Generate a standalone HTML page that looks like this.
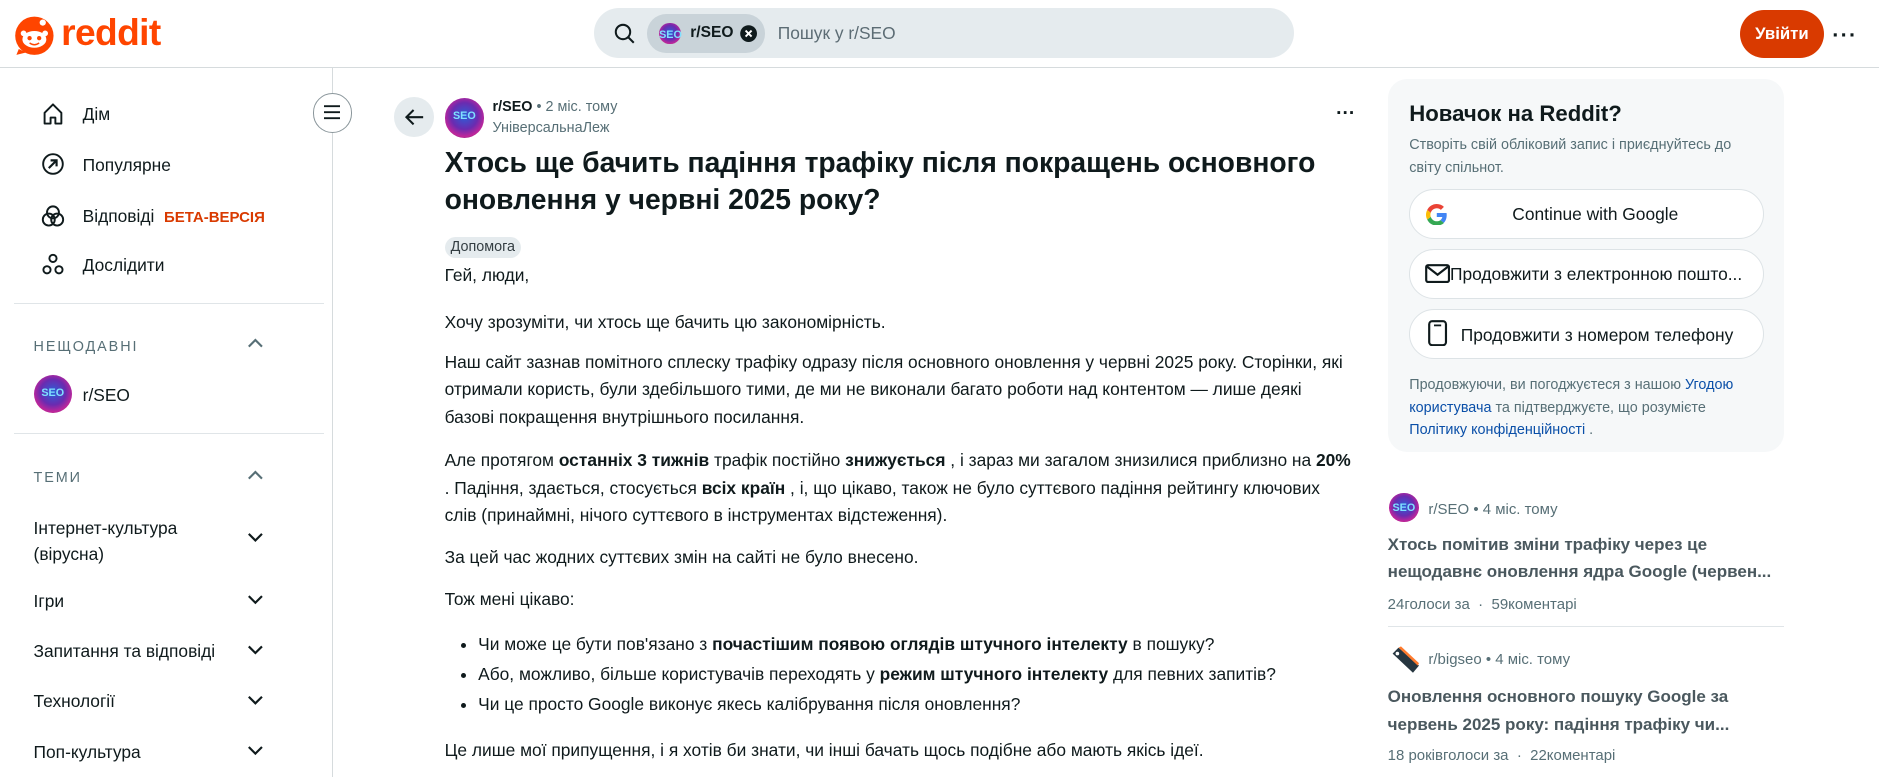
<!DOCTYPE html>
<html><head><meta charset="utf-8">
<style>
html,body{margin:0;padding:0;background:#fff;overflow:hidden}
body{width:1879px;height:777px}
#w{zoom:1.19834;width:1568px;height:648px;position:relative;font-family:"Liberation Sans","Noto Sans CJK SC",sans-serif;color:#0f1a1c}
.a{position:absolute;white-space:nowrap}
.hdr{position:absolute;left:0;top:0;width:1568px;height:56px;border-bottom:1px solid #d6dbdd}
.search{position:absolute;left:496px;top:7px;width:584px;height:41px;border-radius:21px;background:#e5ebee}
.chip{position:absolute;left:540px;top:12px;width:98px;height:32px;border-radius:16px;background:#c9d3d9}
.av{border-radius:50%;background:radial-gradient(circle at 50% 45%,#2b5fd8 0,#6a2bb0 45%,#c0269a 70%,#2b0f3a 100%);position:absolute}
.av::after{content:"SEO";position:absolute;left:0;right:0;top:30%;text-align:center;font-weight:bold;color:#7fe0ff;font-size:9px}
.nav{font-size:14.5px}
.sep{position:absolute;height:1px;background:#e0e5e8}
.sec{font-size:12px;letter-spacing:1.6px;color:#576f76}
.body p{margin:0}
.btn{position:absolute;left:1176px;width:294px;height:40px;border:1px solid #dde3e6;border-radius:21px;background:#fff;font-size:14.5px}
.small{font-size:12px;color:#576f76}
.blue{color:#0a4fa8}
.rt{font-size:14.5px;font-weight:bold;color:#4a585e;line-height:23px}
</style></head><body><div id="w">
<div class="hdr"></div>
<svg class="a" style="left:12px;top:11px" width="34" height="36" viewBox="0 0 34 36"><circle cx="17" cy="19" r="16" fill="#ff4500"/><path d="M4 30 L2 35 L10 33Z" fill="#ff4500"/><ellipse cx="17" cy="22" rx="10" ry="7" fill="#fff"/><circle cx="13" cy="21" r="1.8" fill="#ff4500"/><circle cx="21" cy="21" r="1.8" fill="#ff4500"/><circle cx="24" cy="8" r="2.6" fill="#fff"/><circle cx="8" cy="17" r="2.4" fill="#fff"/><circle cx="26" cy="17" r="2.4" fill="#fff"/><path d="M13 25 q4 3 8 0" stroke="#ff4500" stroke-width="1.2" fill="none"/></svg>
<div class="a" style="left:51px;top:9px;font-size:31px;font-weight:bold;color:#ff4500;letter-spacing:-0.5px">reddit</div>
<div class="search"></div>
<svg class="a" style="left:512px;top:19px" width="18" height="18" viewBox="0 0 18 18"><circle cx="7.5" cy="7.5" r="6" stroke="#0f1a1c" stroke-width="1.7" fill="none"/><path d="M12 12l4.5 4.5" stroke="#0f1a1c" stroke-width="1.7"/></svg>
<div class="chip"></div>
<div class="av" style="left:550px;top:19px;width:18px;height:18px"></div>
<div class="a" style="left:576px;top:20px;font-size:13px;font-weight:bold">r/SEO</div>
<svg class="a" style="left:617px;top:20px" width="16" height="16" viewBox="0 0 16 16"><circle cx="8" cy="8" r="7" fill="#0f1a1c"/><path d="M5.5 5.5l5 5M10.5 5.5l-5 5" stroke="#fff" stroke-width="1.6"/></svg>
<div class="a" style="left:649px;top:19px;font-size:14.5px;color:#5c6c74">Пошук у r/SEO</div>
<div class="a" style="left:1452px;top:8px;width:70px;height:40px;border-radius:20px;background:#d93a00;color:#fff;font-weight:bold;font-size:14px;text-align:center;line-height:40px">Увійти</div>
<div class="a" style="left:1529px;top:18px;font-size:18px;font-weight:bold;letter-spacing:1px">···</div>

<div class="a" style="left:277px;top:57px;width:1px;height:600px;background:#d6dbdd"></div>
<svg class="a" style="left:34px;top:85px" width="20" height="20" viewBox="0 0 20 20"><path d="M3 9L10 2l7 7v9h-5v-5h-4v5H3z" fill="none" stroke="#0f1a1c" stroke-width="1.6" stroke-linejoin="round"/></svg>
<div class="a nav" style="left:69px;top:87px">Дім</div>
<svg class="a" style="left:34px;top:127px" width="20" height="20" viewBox="0 0 20 20"><circle cx="10" cy="10" r="8.2" fill="none" stroke="#0f1a1c" stroke-width="1.6"/><path d="M6.5 13.5l6.5-6.5M8 7h5v5" fill="none" stroke="#0f1a1c" stroke-width="1.8"/></svg>
<div class="a nav" style="left:69px;top:129px">Популярне</div>
<svg class="a" style="left:34px;top:170px" width="20" height="20" viewBox="0 0 20 20"><circle cx="10" cy="7" r="5" fill="none" stroke="#0f1a1c" stroke-width="1.6"/><circle cx="6.5" cy="13" r="5" fill="none" stroke="#0f1a1c" stroke-width="1.6"/><circle cx="13.5" cy="13" r="5" fill="none" stroke="#0f1a1c" stroke-width="1.6"/></svg>
<div class="a nav" style="left:69px;top:172px">Відповіді <span style="color:#d93a00;font-size:12.5px;font-weight:bold;margin-left:4px">БЕТА-ВЕРСІЯ</span></div>
<svg class="a" style="left:34px;top:211px" width="20" height="20" viewBox="0 0 20 20"><circle cx="10" cy="4.5" r="3" fill="none" stroke="#0f1a1c" stroke-width="1.6"/><circle cx="5" cy="14" r="3" fill="none" stroke="#0f1a1c" stroke-width="1.6"/><circle cx="15" cy="14" r="3" fill="none" stroke="#0f1a1c" stroke-width="1.6"/></svg>
<div class="a nav" style="left:69px;top:213px">Дослідити</div>
<div class="sep" style="left:12px;top:253px;width:258px"></div>
<div class="a sec" style="left:28px;top:283px">НЕЩОДАВНІ</div>
<svg class="a" style="left:206px;top:281px" width="14" height="10" viewBox="0 0 14 10"><path d="M1.5 8L7 2.5 12.5 8" fill="none" stroke="#576f76" stroke-width="1.8"/></svg>
<div class="av" style="left:28px;top:313px;width:32px;height:32px"></div>
<div class="a nav" style="left:69px;top:321px">r/SEO</div>
<div class="sep" style="left:12px;top:361px;width:258px"></div>
<div class="a sec" style="left:28px;top:392px">ТЕМИ</div>
<svg class="a" style="left:206px;top:391px" width="14" height="10" viewBox="0 0 14 10"><path d="M1.5 8L7 2.5 12.5 8" fill="none" stroke="#576f76" stroke-width="1.8"/></svg>
<div class="a nav" style="left:28px;top:431px;line-height:21px">Інтернет-культура<br>(вірусна)</div>
<div class="a nav" style="left:28px;top:493px">Ігри</div>
<div class="a nav" style="left:28px;top:535px">Запитання та відповіді</div>
<div class="a nav" style="left:28px;top:577px">Технології</div>
<div class="a nav" style="left:28px;top:619px">Поп-культура</div>
<svg class="a" style="left:206px;top:444px" width="14" height="190" viewBox="0 0 14 190"><g fill="none" stroke="#0f1a1c" stroke-width="1.8"><path d="M1.5 1.5L7 7 12.5 1.5"/><path d="M1.5 53.5L7 59 12.5 53.5"/><path d="M1.5 95.5L7 101 12.5 95.5"/><path d="M1.5 137.5L7 143 12.5 137.5"/><path d="M1.5 179.5L7 185 12.5 179.5"/></g></svg>
<div class="a" style="left:261px;top:78px;width:31px;height:31px;border-radius:50%;border:1px solid #8a969b;background:#fff"></div>
<svg class="a" style="left:270px;top:88px" width="14" height="12" viewBox="0 0 14 12"><path d="M0 1h14M0 6h14M0 11h14" stroke="#0f1a1c" stroke-width="1.6"/></svg>

<div class="a" style="left:329px;top:81px;width:33px;height:33px;border-radius:50%;background:#e5ebee"></div>
<svg class="a" style="left:337px;top:89px" width="17" height="17" viewBox="0 0 17 17"><path d="M16 8.5H2M8 2.5l-6 6 6 6" fill="none" stroke="#0f1a1c" stroke-width="1.7"/></svg>
<div class="av" style="left:371px;top:82px;width:33px;height:33px"></div>
<div class="a" style="left:411px;top:83px;font-size:12px"><b>r/SEO</b> <span style="color:#576f76">• 2 міс. тому</span></div>
<div class="a" style="left:411px;top:100px;font-size:12px;color:#576f76">УніверсальнаЛеж</div>
<div class="a" style="left:1115px;top:86px;font-size:16px;font-weight:bold">···</div>
<div class="a" style="left:371px;top:120px;font-size:23.6px;font-weight:bold;line-height:31px;white-space:normal;width:760px">Хтось ще бачить падіння трафіку після покращень основного оновлення у червні 2025 року?</div>
<div class="a" style="left:371px;top:198px;height:17px;padding:0 5px;border-radius:9px;background:#e5ebee;font-size:12px;line-height:17px;color:#333d42">Допомога</div>
<div class="a body" style="left:371px;top:219px;width:757px;font-size:14.5px;line-height:23px;white-space:normal">
<p>Гей, люди,</p>
<p style="margin-top:16px">Хочу зрозуміти, чи хтось ще бачить цю закономірність.</p>
<p style="margin-top:10px">Наш сайт зазнав помітного сплеску трафіку одразу після основного оновлення у червні 2025 року. Сторінки, які отримали користь, були здебільшого тими, де ми не виконали багато роботи над контентом — лише деякі базові покращення внутрішнього посилання.</p>
<p style="margin-top:13px">Але протягом <b>останніх 3 тижнів</b> трафік постійно <b>знижується</b> , і зараз ми загалом знизилися приблизно на <b>20%</b> . Падіння, здається, стосується <b>всіх країн</b> , і, що цікаво, також не було суттєвого падіння рейтингу ключових слів (принаймні, нічого суттєвого в інструментах відстеження).</p>
<p style="margin-top:12px">За цей час жодних суттєвих змін на сайті не було внесено.</p>
<p style="margin-top:12px">Тож мені цікаво:</p>
<ul style="margin:14px 0 0 0;padding-left:28px;line-height:25px">
<li>Чи може це бути пов'язано з <b>почастішим появою оглядів штучного інтелекту</b> в пошуку?</li>
<li>Або, можливо, більше користувачів переходять у <b>режим штучного інтелекту</b> для певних запитів?</li>
<li>Чи це просто Google виконує якесь калібрування після оновлення?</li>
</ul>
<p style="margin-top:14px">Це лише мої припущення, і я хотів би знати, чи інші бачать щось подібне або мають якісь ідеї.</p>
</div>

<div class="a" style="left:1158px;top:66px;width:331px;height:311px;border-radius:16px;background:#f6f8f9"></div>
<div class="a" style="left:1176px;top:84px;font-size:18.5px;font-weight:bold">Новачок на Reddit?</div>
<div class="a small" style="left:1176px;top:112px;line-height:19px;white-space:normal;width:290px">Створіть свій обліковий запис і приєднуйтесь до світу спільнот.</div>
<div class="btn" style="top:158px"></div>
<svg class="a" style="left:1190px;top:170px" width="18" height="18" viewBox="0 0 48 48"><path fill="#EA4335" d="M24 9.5c3.5 0 6.6 1.2 9.1 3.6l6.8-6.8C35.8 2.4 30.3 0 24 0 14.6 0 6.6 5.4 2.7 13.3l7.9 6.1C12.5 13.6 17.8 9.5 24 9.5z"/><path fill="#4285F4" d="M46.1 24.5c0-1.6-.1-3.1-.4-4.5H24v9h12.4c-.5 2.9-2.2 5.3-4.6 6.9l7.7 6c4.5-4.2 6.6-10.3 6.6-17.4z"/><path fill="#FBBC05" d="M10.5 28.6c-.5-1.5-.8-3-.8-4.6s.3-3.1.8-4.6l-7.9-6.1C1 16.6 0 20.2 0 24s.9 7.4 2.6 10.7l7.9-6.1z"/><path fill="#34A853" d="M24 48c6.5 0 11.9-2.1 15.9-5.8l-7.7-6c-2.1 1.4-4.9 2.3-8.2 2.3-6.2 0-11.5-4.2-13.4-9.9l-7.9 6.1C6.6 42.6 14.6 48 24 48z"/></svg>
<div class="a" style="left:1262px;top:170px;font-size:14.5px;color:#0f1a1c">Continue with Google</div>
<div class="btn" style="top:208px"></div>
<svg class="a" style="left:1189px;top:220px" width="21" height="16" viewBox="0 0 21 16"><rect x="1" y="1" width="19" height="14" rx="1.5" fill="none" stroke="#0f1a1c" stroke-width="1.8"/><path d="M1.5 2l9 7 9-7" fill="none" stroke="#0f1a1c" stroke-width="1.8"/></svg>
<div class="a" style="left:1210px;top:220px;font-size:14.5px">Продовжити з електронною пошто...</div>
<div class="btn" style="top:258px"></div>
<svg class="a" style="left:1192px;top:267px" width="16" height="22" viewBox="0 0 16 22"><rect x="1" y="1" width="14" height="20" rx="2.5" fill="none" stroke="#0f1a1c" stroke-width="1.8"/><path d="M5 4.5h6" stroke="#0f1a1c" stroke-width="1.5"/></svg>
<div class="a" style="left:1219px;top:271px;font-size:14.5px">Продовжити з номером телефону</div>
<div class="a small" style="left:1176px;top:312px;line-height:19px;white-space:normal;width:282px">Продовжуючи, ви погоджуєтеся з нашою <span class="blue">Угодою користувача</span> та підтверджуєте, що розумієте <span class="blue">Політику конфіденційності</span> .</div>

<div class="av" style="left:1159px;top:411px;width:25px;height:25px"></div>
<div class="a small" style="left:1192px;top:418px;font-size:12.5px">r/SEO • 4 міс. тому</div>
<div class="a rt" style="left:1158px;top:443px;font-size:14.2px">Хтось помітив зміни трафіку через це<br>нещодавнє оновлення ядра Google (червен...</div>
<div class="a small" style="left:1158px;top:497px;font-size:12.5px">24голоси за &nbsp;·&nbsp; 59коментарі</div>
<div class="sep" style="left:1158px;top:522px;width:331px"></div>
<svg class="a" style="left:1159px;top:537px" width="26" height="26" viewBox="0 0 26 26"><path d="M3 8l5-5 17 15-5 6z" fill="#263640"/><path d="M8 3l2-1 15 14-1 2z" fill="#ff7b2e"/><circle cx="7" cy="8" r="1.5" fill="#fff"/></svg>
<div class="a small" style="left:1192px;top:543px;font-size:12.5px">r/bigseo • 4 міс. тому</div>
<div class="a rt" style="left:1158px;top:570px;font-size:14.2px">Оновлення основного пошуку Google за<br>червень 2025 року: падіння трафіку чи...</div>
<div class="a small" style="left:1158px;top:623px;font-size:12.5px">18 роківголоси за &nbsp;·&nbsp; 22коментарі</div>
</div></body></html>
